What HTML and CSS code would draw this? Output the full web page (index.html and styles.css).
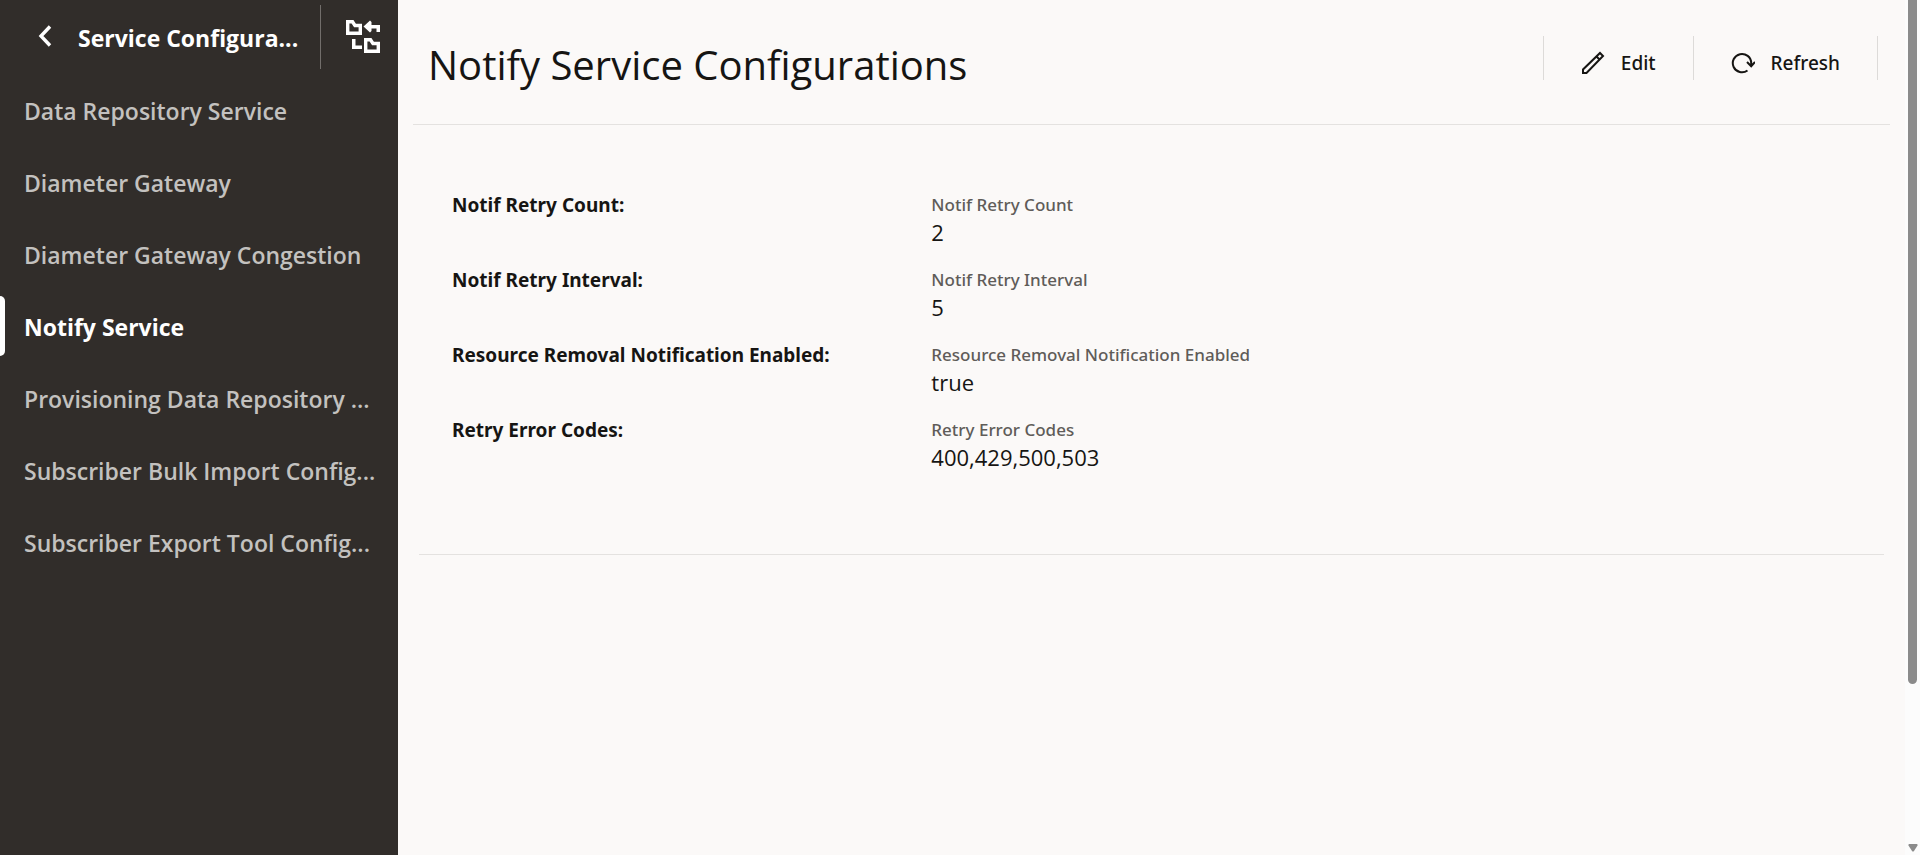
FILE: index.html
```html
<!DOCTYPE html>
<html lang="en">
<head>
<meta charset="utf-8">
<title>Notify Service Configurations</title>
<link rel="stylesheet" href="styles.css">
</head>
<body>
<div class="app">
  <aside class="sidebar">
    <header class="sidebar-head">
      <button class="icon-button back" type="button" aria-label="Back">
        <svg width="14" height="22" viewBox="0 0 14 22" fill="none" stroke="currentColor" stroke-width="3.4"><path d="M12 1.5 3 11l9 9.5"/></svg>
      </button>
      <h2 class="sidebar-title">Service Configura...</h2>
      <button class="icon-button tree" type="button" aria-label="Show hierarchy">
        <svg width="34" height="34" viewBox="0 0 34 34">
          <path fill="none" stroke="currentColor" stroke-width="3.400" d="M1.700 1.700H6.500L9 5.500H14.300V13.300H1.700ZM19.700 19.700H24.500L27 23.500H32.300V31.300H19.700Z"/>
          <path fill="currentColor" d="M17.500 6.500 24 .5 25.500 2v3H34v7h-3.500V8.500h-5V11L24 12.500ZM6 19h3.500v6.500h6.500v3.500H6Z"/>
        </svg>
      </button>
    </header>
    <nav class="nav" aria-label="Service configurations">
      <a class="nav-item" href="#">Data Repository Service</a>
      <a class="nav-item" href="#">Diameter Gateway</a>
      <a class="nav-item" href="#">Diameter Gateway Congestion</a>
      <a class="nav-item active" href="#" aria-current="page">Notify Service</a>
      <a class="nav-item" href="#">Provisioning Data Repository ...</a>
      <a class="nav-item" href="#">Subscriber Bulk Import Config...</a>
      <a class="nav-item" href="#">Subscriber Export Tool Config...</a>
    </nav>
  </aside>
  <main class="main">
    <header class="page-head">
      <h1 class="page-title">Notify Service Configurations</h1>
      <div class="toolbar">
        <button class="tool" type="button">
          <svg width="24" height="24" viewBox="0 0 24 24" fill="none" stroke="currentColor" stroke-width="2"><path d="M2 22v-3.500L19 2 22 5 5.500 22ZM15.500 5.500 18.500 8.500"/></svg>
          Edit
        </button>
        <button class="tool" type="button">
          <svg width="24" height="24" viewBox="0 0 24 24" fill="none" stroke="currentColor" stroke-width="2"><path d="M16.500 19.500A9.200 9.200 0 1 1 20.200 12v3M16 11l4.200 4.200L24 11"/></svg>
          Refresh
        </button>
      </div>
    </header>
    <dl class="details">
      <dt class="label">Notif Retry Count:</dt>
      <dd class="field"><span class="hint">Notif Retry Count</span><span class="value">2</span></dd>
      <dt class="label">Notif Retry Interval:</dt>
      <dd class="field"><span class="hint">Notif Retry Interval</span><span class="value">5</span></dd>
      <dt class="label">Resource Removal Notification Enabled:</dt>
      <dd class="field"><span class="hint">Resource Removal Notification Enabled</span><span class="value">true</span></dd>
      <dt class="label">Retry Error Codes:</dt>
      <dd class="field"><span class="hint">Retry Error Codes</span><span class="value">400,429,500,503</span></dd>
    </dl>
  </main>
  <div class="scrollbar" aria-hidden="true">
    <div class="thumb"></div>
    <svg class="scroll-arrow" width="10" height="8" viewBox="0 0 10 8"><path fill="#8b8b8b" d="M1 0h8q1 .5.5 1.500L6 7Q5 8 4 7L.5 1.500Q0 .5 1 0Z"/></svg>
  </div>
</div>
</body>
</html>
```
FILE: styles.css
```css
* {
  box-sizing: border-box;
}

body {
  margin: 0;
  font-family: "Open Sans", "Noto Sans", sans-serif;
  color: #161513;
  background: #fbf9f8;
}

h1, h2, dl, dd {
  margin: 0;
}

button {
  font: inherit;
  color: inherit;
  background: none;
  border: 0;
  padding: 0;
  cursor: pointer;
}

svg {
  display: block;
  flex: none;
}

.tool, .label, .hint {
  font-family: "Noto Sans", "Open Sans", sans-serif;
}

.app {
  display: flex;
  min-height: 100vh;
}

/* Sidebar */
.sidebar {
  flex: none;
  width: 398px;
  background: #312d2a;
  color: #fff;
}

.sidebar-head {
  display: flex;
  align-items: center;
  height: 75px;
  padding-bottom: 1px;
}

.back {
  padding: 0 26px 2px 38px;
}

.sidebar-title {
  flex: 1;
  font-size: 23px;
  line-height: 32px;
  padding-top: 2px;
  font-weight: 700;
  white-space: nowrap;
}

.tree {
  display: flex;
  align-items: center;
  height: 64px;
  padding: 0 18px 0 25px;
  border-left: 1px solid #726e6b;
}

.nav-item {
  display: block;
  position: relative;
  padding: 0 24px;
  font-size: 23px;
  line-height: 72px;
  font-weight: 600;
  color: #c3c1bf;
  text-decoration: none;
  white-space: nowrap;
}

.nav-item.active {
  color: #fff;
  font-weight: 700;
}

.nav-item.active::before {
  content: "";
  position: absolute;
  left: 0;
  top: 5px;
  width: 5px;
  height: 60px;
  background: #fff;
  border-radius: 0 6px 6px 0;
}

/* Page */
.main {
  flex: 1;
  min-width: 0;
  padding: 0 15px;
}

.page-head {
  display: flex;
  align-items: flex-start;
  justify-content: space-between;
  height: 125px;
  padding: 36px 12px 0 15px;
  border-bottom: 1px solid #e4e2e0;
}

.page-title {
  font-size: 40px;
  line-height: 58px;
  font-weight: 400;
}

.toolbar {
  display: flex;
  border-left: 1px solid #dddbd9;
}

.tool {
  display: flex;
  align-items: center;
  gap: 16px;
  height: 44px;
  padding: 10px 37px 0;
  font-size: 19px;
  line-height: 28px;
  font-weight: 500;
  border-right: 1px solid #dddbd9;
}

.details {
  display: grid;
  grid-template-columns: 1fr 2fr;
  row-gap: 21px;
  margin: 0 6px;
  padding: 65px 33px 85px;
  border-bottom: 1px solid #e4e2e0;
}

.label {
  font-size: 19px;
  line-height: 30px;
  font-weight: 700;
}

.field {
  padding-left: 13px;
}

.hint, .value {
  display: block;
}

.hint {
  font-size: 17px;
  line-height: 30px;
  font-weight: 500;
  color: #5f5c59;
}

.value {
  font-size: 22px;
  line-height: 24px;
}

/* Scroll track */
.scrollbar {
  flex: none;
  display: flex;
  flex-direction: column;
  align-items: center;
  justify-content: space-between;
  width: 15px;
  padding: 0 3px 3px;
  background: #fcfcfc;
}

.thumb {
  width: 9px;
  height: 80vh;
  background: #8b8b8b;
  border-radius: 0 0 5px 5px;
}
```
